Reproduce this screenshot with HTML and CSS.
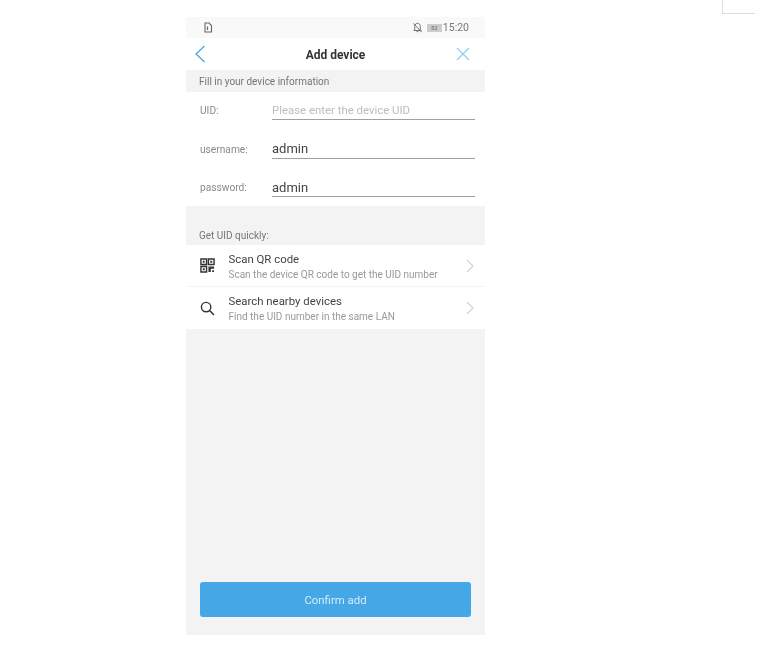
FILE: index.html
```html
<!DOCTYPE html>
<html lang="en">
<head>
<meta charset="utf-8">
<title>Add device</title>
<link rel="stylesheet" href="styles.css">
</head>
<body>
<div class="corner"></div>
<main class="phone">
  <div class="status">
    <svg class="sim" viewBox="0 0 10 11" width="10" height="11"><path d="M2 1h4l2.500 2.500V10H2z" fill="none" stroke="#666" stroke-width="1.100"/><path d="M4.500 4.500v3.500" stroke="#666" stroke-width="1.200"/></svg>
    <div class="status-right">
      <svg viewBox="0 0 12 12" width="11" height="11"><path d="M6 1.500c-2 0-3 1.400-3 3.200V8L2 9.300h8L9 8V4.700c0-1.800-1-3.200-3-3.200zM5 10.500h2M1.500 1.500l9 9.500" fill="none" stroke="#666" stroke-width="1"/></svg>
      <span class="battery"><span class="battery-level">52</span></span>
      <span class="time">15:20</span>
    </div>
  </div>
  <header class="nav">
    <svg class="nav-icon" viewBox="0 0 12 18" width="12" height="18"><path d="M10.500 1L2 9l8.500 8" fill="none" stroke="#4aa8df" stroke-width="1.300"/></svg>
    <h1>Add device</h1>
    <svg class="nav-icon" viewBox="0 0 14 14" width="14" height="14"><path d="M1 1l12 12M13 1L1 13" fill="none" stroke="#8ccbec" stroke-width="1.100"/></svg>
  </header>
  <div class="section-title first">Fill in your device information</div>
  <section class="form">
    <div class="field">
      <span class="label">UID:</span>
      <span class="value placeholder">Please enter the device UID</span>
    </div>
    <div class="field">
      <span class="label">username:</span>
      <span class="value">admin</span>
    </div>
    <div class="field">
      <span class="label">password:</span>
      <span class="value">admin</span>
    </div>
  </section>
  <div class="section-title second">Get UID quickly:</div>
  <section class="list">
    <div class="item">
      <svg class="item-icon" viewBox="0 0 16 16" width="15" height="15">
        <path d="M1 1h6v6H1zM9 1h6v6H9zM1 9h6v6H1z" fill="none" stroke="#333" stroke-width="1.500"/>
        <path d="M3 3h2v2H3zM11 3h2v2h-2zM3 11h2v2H3zM9 9h6v2.500h-3.500V15H9zM13 13h2v2h-2z" fill="#333"/>
      </svg>
      <div class="item-text">
        <div class="item-title">Scan QR code</div>
        <div class="item-sub">Scan the device QR code to get the UID number</div>
      </div>
      <svg class="chevron" viewBox="0 0 8 14" width="8" height="14"><path d="M1 1l6 6-6 6" fill="none" stroke="#d0d0d0" stroke-width="1.100"/></svg>
    </div>
    <div class="item">
      <svg class="item-icon" viewBox="0 0 16 16" width="15" height="15"><circle cx="6.500" cy="6.500" r="5" fill="none" stroke="#333" stroke-width="1.500"/><path d="M10.200 10.200L15 15" stroke="#333" stroke-width="1.600"/></svg>
      <div class="item-text">
        <div class="item-title">Search nearby devices</div>
        <div class="item-sub">Find the UID number in the same LAN</div>
      </div>
      <svg class="chevron" viewBox="0 0 8 14" width="8" height="14"><path d="M1 1l6 6-6 6" fill="none" stroke="#d0d0d0" stroke-width="1.100"/></svg>
    </div>
  </section>
  <div class="footer">
    <button class="confirm" type="button">Confirm add</button>
  </div>
</main>
</body>
</html>
```
FILE: styles.css
```css
* { box-sizing: border-box; }
html, body { margin: 0; padding: 0; background: #fff; }
body {
  height: 645px;
  overflow: hidden;
  padding: 17px 0 0 186px;
  font-family: Roboto, "Liberation Sans", sans-serif;
  color: #333;
}
.corner {
  position: absolute;
  left: 722px;
  top: -1px;
  width: 33px;
  height: 15px;
  border-left: 1px solid #ddd;
  border-bottom: 1px solid #ddd;
}
.phone {
  width: 299px;
  height: 618px;
  display: flex;
  flex-direction: column;
  background: #f3f3f3;
  filter: blur(0.35px);
}
.status {
  height: 21px;
  flex: none;
  display: flex;
  align-items: center;
  justify-content: space-between;
  padding: 0 16px 0 17px;
  background: #f9f9f9;
}
.status-right { display: flex; align-items: center; gap: 5px; }
.battery {
  width: 15px;
  height: 8px;
  background: #ccc;
  font-size: 6px;
  line-height: 8px;
  text-align: center;
  color: #666;
  position: relative;
  margin-right: 1px;
  margin-left: -1px;
}
.time { font-size: 10.500px; color: #777; margin-left: -5px; }
.nav {
  height: 32px;
  flex: none;
  display: flex;
  align-items: center;
  justify-content: space-between;
  padding: 0 15px 0 8px;
  background: #fff;
}
.nav h1 {
  margin: 1px 0 0 9px;
  font-size: 12px;
  font-weight: 700;
  color: #333;
}
.section-title {
  flex: none;
  font-size: 10px;
  color: #757575;
  padding-left: 13px;
}
.section-title.first { height: 22px; padding-top: 1px; line-height: 22px; }
.section-title.second { height: 39px; padding-top: 23px; line-height: 14px; }
.form {
  flex: none;
  height: 114px;
  padding: 9px 10px 0 14px;
  background: #fff;
}
.field {
  height: 19px;
  margin-bottom: 19.500px;
  display: flex;
  align-items: center;
}
.label {
  width: 72px;
  flex: none;
  font-size: 10.200px;
  color: #8a8a8a;
}
.value {
  flex: 1;
  height: 100%;
  display: flex;
  align-items: center;
  font-size: 13px;
  color: #444;
  border-bottom: 1px solid #a0a0a0;
}
.value.placeholder { font-size: 11.400px; color: #bdbdbd; }
.list { flex: none; background: #fff; }
.item {
  height: 42px;
  display: flex;
  align-items: center;
  padding: 0 11px 0 14px;
  border-bottom: 1px solid #f4f4f4;
}
.item:last-child { border-bottom: none; }
.item-icon { flex: none; margin-right: 13.500px; }
.item-text { flex: 1; padding-top: 2px; }
.item-title { font-size: 11.400px; line-height: 15px; color: #444; }
.item-sub { font-size: 10px; line-height: 14px; color: #999; margin-top: 1px; }
.chevron { flex: none; }
.footer {
  flex: 1;
  display: flex;
  align-items: flex-end;
  padding: 0 14px 18px;
}
.confirm {
  width: 271px;
  height: 35px;
  border: none;
  border-radius: 3px;
  background: #45a7e6;
  color: #d6ecfa;
  font-family: inherit;
  font-size: 11.400px;
  padding-top: 2px;
}
```
